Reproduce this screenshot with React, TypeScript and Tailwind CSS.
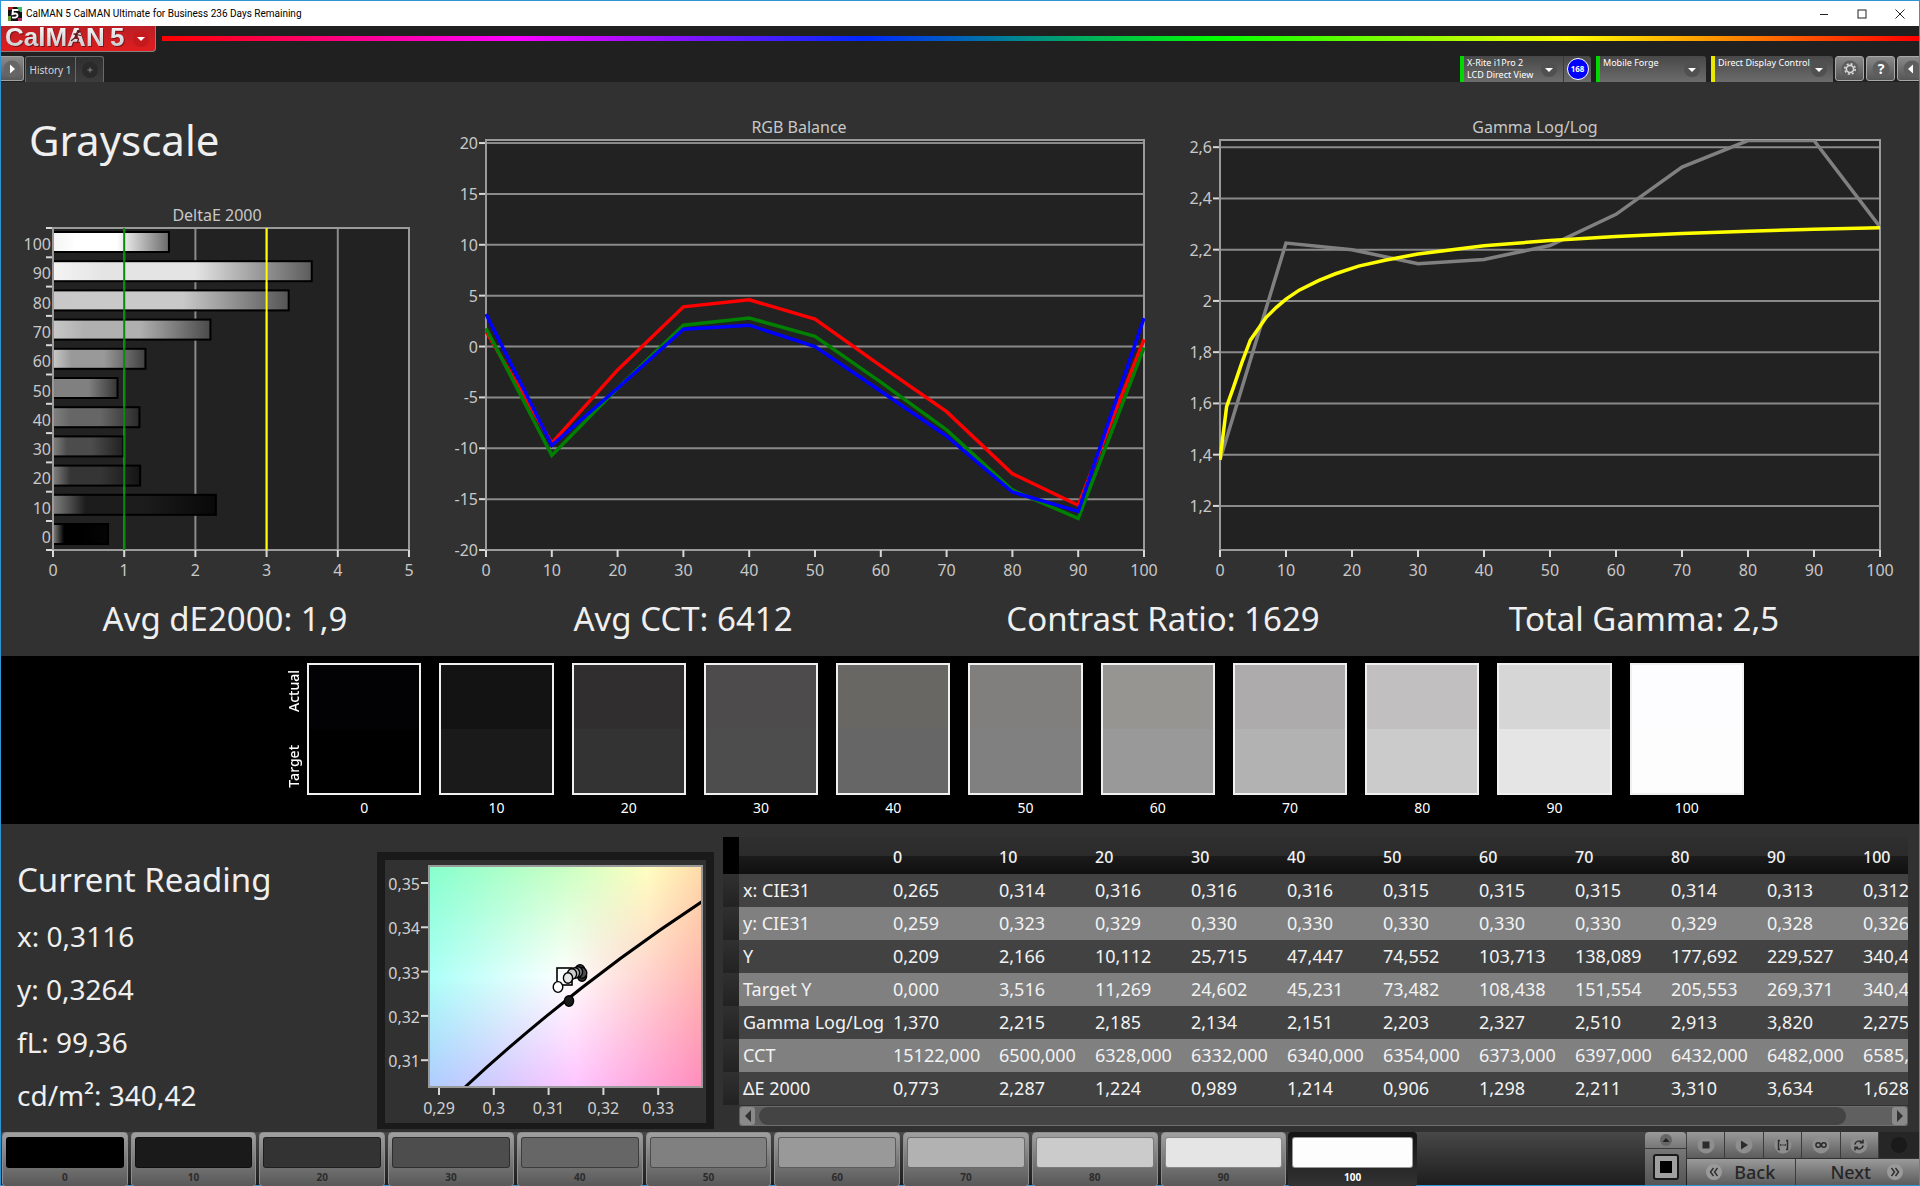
import type { ReactNode } from "react"

type Point = [number, number]
type Series = { color: string; points: Point[] }

const LEVELS = [
  { level: 0, target: "#000000", actual: "#020204", dE: 0.773, mid: "#000000", end: "#050505" },
  { level: 10, target: "#1a1a1a", actual: "#131313", dE: 2.287, mid: "#1c1c1c", end: "#080808" },
  { level: 20, target: "#333333", actual: "#312e2f", dE: 1.224, mid: "#353535", end: "#141414" },
  { level: 30, target: "#4d4d4d", actual: "#4e4b4c", dE: 0.989, mid: "#4c4c4c", end: "#202020" },
  { level: 40, target: "#666666", actual: "#696764", dE: 1.214, mid: "#666666", end: "#2a2a2a" },
  { level: 50, target: "#808080", actual: "#817f7e", dE: 0.906, mid: "#808080", end: "#353535" },
  { level: 60, target: "#999999", actual: "#979592", dE: 1.298, mid: "#999999", end: "#404040" },
  { level: 70, target: "#b2b2b2", actual: "#adabab", dE: 2.211, mid: "#b0b0b0", end: "#4a4a4a" },
  { level: 80, target: "#cbcbcb", actual: "#c1bfc0", dE: 3.31, mid: "#c9c9c9", end: "#555555" },
  { level: 90, target: "#e5e5e5", actual: "#d6d6d6", dE: 3.634, mid: "#e4e4e4", end: "#5c5c5c" },
  { level: 100, target: "#fdfdfd", actual: "#fdfdff", dE: 1.628, mid: "#ffffff", end: "#6a6a6a" },
]

const READINGS = ["x: 0,3116", "y: 0,3264", "fL: 99,36", "cd/m²: 340,42"]
const STATS = ["Avg dE2000: 1,9", "Avg CCT: 6412", "Contrast Ratio: 1629", "Total Gamma: 2,5"]

const TABLE = [
  { label: "x: CIE31", values: ["0,265", "0,314", "0,316", "0,316", "0,316", "0,315", "0,315", "0,315", "0,314", "0,313", "0,312"] },
  { label: "y: CIE31", values: ["0,259", "0,323", "0,329", "0,330", "0,330", "0,330", "0,330", "0,330", "0,329", "0,328", "0,326"] },
  { label: "Y", values: ["0,209", "2,166", "10,112", "25,715", "47,447", "74,552", "103,713", "138,089", "177,692", "229,527", "340,420"] },
  { label: "Target Y", values: ["0,000", "3,516", "11,269", "24,602", "45,231", "73,482", "108,438", "151,554", "205,553", "269,371", "340,420"] },
  { label: "Gamma Log/Log", values: ["1,370", "2,215", "2,185", "2,134", "2,151", "2,203", "2,327", "2,510", "2,913", "3,820", "2,275"] },
  { label: "CCT", values: ["15122,000", "6500,000", "6328,000", "6332,000", "6340,000", "6354,000", "6373,000", "6397,000", "6432,000", "6482,000", "6585,000"] },
  { label: "ΔE 2000", values: ["0,773", "2,287", "1,224", "0,989", "1,214", "0,906", "1,298", "2,211", "3,310", "3,634", "1,628"] },
]

const RGB_SERIES: Series[] = [
  { color: "#ff0000", points: [[0, 1.5], [10, -9.5], [20, -2.3], [30, 3.9], [40, 4.6], [50, 2.7], [60, -1.9], [70, -6.4], [80, -12.5], [90, -15.6], [100, 0.7]] },
  { color: "#008000", points: [[0, 1.8], [10, -10.7], [20, -4.1], [30, 2.1], [40, 2.8], [50, 1], [60, -3.5], [70, -8.2], [80, -14.1], [90, -16.9], [100, -0.1]] },
  { color: "#0000ff", points: [[0, 3.2], [10, -9.7], [20, -4.1], [30, 1.7], [40, 2.1], [50, 0], [60, -4.4], [70, -8.8], [80, -14.3], [90, -16.2], [100, 2.8]] },
]

const GAMMA_SERIES: Series[] = [
  { color: "#808080", points: [[0, 1.38], [10, 2.226], [20, 2.2], [30, 2.145], [40, 2.162], [50, 2.216], [60, 2.338], [70, 2.522], [80, 2.626], [90, 2.626], [100, 2.289]] },
  {
    color: "#ffff00",
    points: [
      [0, 1.38], [1, 1.587], [2, 1.66], [3.3, 1.758], [4.6, 1.847], [7, 1.936], [8.5, 1.974], [10, 2.007], [12, 2.042], [15, 2.08], [17.5, 2.106],
      [21, 2.136], [25, 2.159], [30, 2.183], [40, 2.215], [50, 2.236], [60, 2.251], [70, 2.263], [80, 2.272], [90, 2.28], [100, 2.286],
    ],
  },
]

/** Line chart with horizontal grid lines and a 0-100 stimulus axis. */
const LineChart = ({
  title,
  min,
  max,
  left = 56,
  ticks,
  series,
}: {
  title: string
  min: number
  max: number
  left?: number
  ticks: number[]
  series: Series[]
}) => {
  const right = 714
  const top = 30
  const bottom = 440
  const x = (v: number) => left + ((right - left) * v) / 100
  const y = (v: number) => bottom - ((bottom - top) * (v - min)) / (max - min)
  const clipId = title.replace(/\W/g, "")

  return (
    <svg viewBox="0 0 736 480" role="img" aria-label={title} className="block h-auto w-full" fontSize="16" fill="#c8c8c8">
      <clipPath id={clipId}>
        <rect x={left - 1} y={top} width={right - left + 2} height={bottom - top} />
      </clipPath>
      <text x="369" y="23" textAnchor="middle">{title}</text>
      <rect x={left} y={top} width={right - left} height={bottom - top} fill="#222222" />
      {ticks.map((t) => (
        <g key={t}>
          <line x1={left} x2={right} y1={y(t)} y2={y(t)} stroke="#8a8a8a" strokeWidth="2" />
          <line x1={left - 7} x2={left} y1={y(t)} y2={y(t)} stroke="#d8d8d8" strokeWidth="2" />
          <text x={left - 8} y={y(t) + 6} textAnchor="end">{String(t).replace(".", ",")}</text>
        </g>
      ))}
      <rect x={left} y={top} width={right - left} height={bottom - top} fill="none" stroke="#9a9a9a" strokeWidth="2" />
      {LEVELS.map(({ level }) => (
        <g key={level}>
          <line x1={x(level)} x2={x(level)} y1={bottom} y2={bottom + 7} stroke="#d8d8d8" strokeWidth="2" />
          <text x={x(level)} y="466" textAnchor="middle">{level}</text>
        </g>
      ))}
      <g clipPath={`url(#${clipId})`}>
        {series.map((s) => (
          <polyline
            key={s.color}
            points={s.points.map(([px, py]) => `${x(px)},${y(py)}`).join(" ")}
            fill="none"
            stroke={s.color}
            strokeWidth="3.5"
          />
        ))}
      </g>
    </svg>
  )
}

const DeltaEChart = () => {
  const x = (v: number) => 52 + v * 71.2
  const rows = [...LEVELS].reverse()

  return (
    <svg viewBox="0 0 429 400" role="img" aria-label="DeltaE 2000" className="block h-auto w-full" fontSize="16" fill="#c8c8c8">
      <defs>
        {rows.map((r) => (
          <linearGradient key={r.level} id={`bar${r.level}`}>
            <stop offset="0" stopColor={r.level > 80 ? "#f4f4f4" : r.level > 50 ? "#c8c8c8" : "#808080"} />
            <stop offset="0.2" stopColor={r.mid} />
            <stop offset="0.55" stopColor={r.mid} />
            <stop offset="1" stopColor={r.end} />
          </linearGradient>
        ))}
      </defs>
      <text x="216" y="31" textAnchor="middle">DeltaE 2000</text>
      <rect x="52" y="38" width="356" height="322" fill="#222222" />
      {[1, 2, 3, 4].map((v) => (
        <line key={v} x1={x(v)} x2={x(v)} y1="38" y2="360" stroke="#8a8a8a" strokeWidth="2" />
      ))}
      {rows.map((r, i) => (
        <g key={r.level}>
          <line x1="45" x2="52" y1={38 + i * 29.3} y2={38 + i * 29.3} stroke="#d8d8d8" strokeWidth="2" />
          <text x="50" y={60 + i * 29.3} textAnchor="end">{r.level}</text>
          <rect
            x="52"
            y={42 + i * 29.2}
            width={r.dE * 71.2}
            height="20"
            fill={`url(#bar${r.level})`}
            stroke="#000000"
            strokeWidth="2"
          />
        </g>
      ))}
      <line x1="45" x2="52" y1="360" y2="360" stroke="#d8d8d8" strokeWidth="2" />
      <rect x="52" y="38" width="356" height="322" fill="none" stroke="#9a9a9a" strokeWidth="2" />
      {[0, 1, 2, 3, 4, 5].map((v) => (
        <g key={v}>
          <line x1={x(v)} x2={x(v)} y1="360" y2="367" stroke="#d8d8d8" strokeWidth="2" />
          <text x={x(v)} y="386" textAnchor="middle">{v}</text>
        </g>
      ))}
      <line x1={x(1)} x2={x(1)} y1="38" y2="360" stroke="#0a8a0a" strokeWidth="2" />
      <line x1={x(3)} x2={x(3)} y1="38" y2="360" stroke="#ffff00" strokeWidth="2" />
    </svg>
  )
}

/** Zoomed CIE 1931 view around D65, with the daylight locus and measured points. */
const CieChart = () => (
  <svg viewBox="0 0 321 263" role="img" aria-label="CIE 1931 xy" className="block h-auto w-full" fontSize="16" fill="#d0d0d0">
    <defs>
      <linearGradient id="cieTop">
        <stop offset="0" stopColor="#86ffcc" />
        <stop offset="0.5" stopColor="#c8ffc2" />
        <stop offset="0.8" stopColor="#ffffc0" />
        <stop offset="1" stopColor="#ffdaa8" />
      </linearGradient>
      <linearGradient id="cieMid">
        <stop offset="0" stopColor="#acfff8" />
        <stop offset="0.5" stopColor="#ffffff" />
        <stop offset="1" stopColor="#ffb6ae" />
      </linearGradient>
      <linearGradient id="cieLow">
        <stop offset="0" stopColor="#aeccff" />
        <stop offset="0.54" stopColor="#ffc4ff" />
        <stop offset="1" stopColor="#ff8cbc" />
      </linearGradient>
      <linearGradient id="fadeDown" x2="0" y2="1">
        <stop offset="0" stopColor="#fff" />
        <stop offset="0.5" stopColor="#000" />
      </linearGradient>
      <linearGradient id="fadeUp" x2="0" y2="1">
        <stop offset="0.5" stopColor="#000" />
        <stop offset="1" stopColor="#fff" />
      </linearGradient>
      <mask id="topMask">
        <rect x="44" y="5" width="273" height="221" fill="url(#fadeDown)" />
      </mask>
      <mask id="lowMask">
        <rect x="44" y="5" width="273" height="221" fill="url(#fadeUp)" />
      </mask>
      <clipPath id="cieClip">
        <rect x="44" y="5" width="273" height="221" />
      </clipPath>
    </defs>
    <rect x="44" y="5" width="273" height="221" fill="url(#cieMid)" />
    <rect x="44" y="5" width="273" height="221" fill="url(#cieTop)" mask="url(#topMask)" />
    <rect x="44" y="5" width="273" height="221" fill="url(#cieLow)" mask="url(#lowMask)" />
    <path d="M78 228 Q190 124 318 40" fill="none" stroke="#000" strokeWidth="3" clipPath="url(#cieClip)" />
    <rect x="44" y="5" width="273" height="221" fill="none" stroke="#9a9a9a" strokeWidth="2" />
    <rect x="172" y="107" width="15" height="17" fill="none" stroke="#000" strokeWidth="1.6" />
    <g stroke="#000" strokeWidth="1.4">
      <ellipse cx="184" cy="140" rx="4.6" ry="5.2" fill="#1a1a1a" />
      <ellipse cx="197" cy="115" rx="4.6" ry="5.2" fill="#333" />
      <ellipse cx="195" cy="109" rx="4.8" ry="5.4" fill="#333" />
      <ellipse cx="197" cy="112" rx="4.8" ry="5.4" fill="#4d4d4d" />
      <ellipse cx="193" cy="111" rx="4.6" ry="5.2" fill="#808080" />
      <ellipse cx="190" cy="112" rx="4.6" ry="5.2" fill="#b2b2b2" />
      <ellipse cx="187" cy="113" rx="4.6" ry="5.2" fill="#ccc" />
      <ellipse cx="183" cy="117" rx="4.6" ry="5.2" fill="#e6e6e6" />
      <ellipse cx="173" cy="126" rx="4.8" ry="5.4" fill="#fff" />
    </g>
    {["0,35", "0,34", "0,33", "0,32", "0,31"].map((label, i) => (
      <g key={label}>
        <line x1="36" x2="43" y1={22 + i * 44.3} y2={22 + i * 44.3} stroke="#d8d8d8" strokeWidth="2" />
        <text x="35" y={29 + i * 44.3} textAnchor="end">{label}</text>
      </g>
    ))}
    {["0,29", "0,3", "0,31", "0,32", "0,33"].map((label, i) => (
      <g key={label}>
        <line x1={54 + i * 54.8} x2={54 + i * 54.8} y1="227" y2="234" stroke="#d8d8d8" strokeWidth="2" />
        <text x={54 + i * 54.8} y="253" textAnchor="middle">{label}</text>
      </g>
    ))}
  </svg>
)

const TitleBar = () => (
  <div className="flex h-[25px] items-center bg-white text-black">
    <svg viewBox="0 0 14 14" className="ml-[7px] size-[14px]" aria-hidden="true">
      <rect width="14" height="14" fill="#111" />
      <path d="M0 0h5v3H0z" fill="#a22" />
      <path d="M9 0h5v5h-2z" fill="#3b6" />
      <path d="M0 9h3v5H0z" fill="#693" />
      <path d="M10 11h4v3h-4z" fill="#b36" />
      <path d="M10.5 3H5l-.5 4c3-1 5-.5 5 1.4C9.500 10.500 7 11 4 10.400" fill="none" stroke="#fff" strokeWidth="1.9" />
    </svg>
    <span className="ml-1 flex-1 font-[Roboto,sans-serif] text-[10px]">CalMAN 5 CalMAN Ultimate for Business 236 Days Remaining</span>
    <button aria-label="Minimize" className="grid h-full w-[38px] place-items-center">
      <svg viewBox="0 0 10 10" className="size-[10px]" stroke="#222" fill="none"><path d="M1 5.5h8" /></svg>
    </button>
    <button aria-label="Maximize" className="grid h-full w-[38px] place-items-center">
      <svg viewBox="0 0 10 10" className="size-[10px]" stroke="#222" fill="none"><rect x="1" y="1" width="8" height="8" /></svg>
    </button>
    <button aria-label="Close" className="grid h-full w-[38px] place-items-center">
      <svg viewBox="0 0 10 10" className="size-[10px]" stroke="#222" fill="none"><path d="M.5.5l9 9M9.5.5l-9 9" /></svg>
    </button>
  </div>
)

const Logo = () => (
  <button aria-label="CalMAN 5 menu" className="h-[26px] w-[155px] rounded-br-sm border-r border-b border-[#8d8080] bg-linear-to-b from-[#b91f24] to-[#e11c1f]">
    <svg viewBox="0 0 154 25" className="block h-[25px] w-[154px] overflow-visible">
      <defs>
        <linearGradient id="silver" x2="0" y2="1">
          <stop offset="0" stopColor="#ffffff" />
          <stop offset="1" stopColor="#bfc3c6" />
        </linearGradient>
      </defs>
      <g
        className="drop-shadow-[1px_1px_0_#7d1114]"
        fontFamily="'Liberation Sans', Arial, sans-serif"
        fontWeight="700"
        fontSize="26"
        fill="url(#silver)"
      >
        <text x="4" y="20">CalMAN</text>
        <text x="109" y="20">5</text>
      </g>
      <g stroke="#5a1a1c" strokeWidth="1.3" fill="none" strokeLinecap="round">
        <circle cx="77.5" cy="5.5" r="1" fill="#5a1a1c" />
        <path d="M76.5 7.5l-2 4 3 1.5-1 3.5M74.5 11.5l-4 3M73 8l3 .5 3.5 1" />
      </g>
      <circle cx="140" cy="13" r="8" fill="#c41a1e" />
      <path d="M136 11h8l-4 4z" fill="#fff" />
    </svg>
  </button>
)

const DropArrow = () => (
  <svg viewBox="0 0 16 16" className="size-4 shrink-0" aria-hidden="true">
    <circle cx="8" cy="8" r="8" fill="#505050" />
    <path d="M4 7h8l-4 4z" fill="#fff" />
  </svg>
)

const DeviceMenu = ({ lines, stripe, className, children }: { lines: string[]; stripe: string; className: string; children?: ReactNode }) => (
  <div className={`flex h-full rounded-t-[3px] bg-linear-to-b from-[#484848] to-[#6c6c6c] ${className}`}>
    <span className={`w-1 shrink-0 ${stripe}`} />
    <button aria-haspopup="menu" className="flex min-w-0 flex-1 items-start pr-[6px] pl-[3px] text-left text-[9px] leading-3 text-white">
      <span className="flex-1 pt-px whitespace-nowrap">
        {lines.map((l) => (
          <span key={l} className="block">{l}</span>
        ))}
      </span>
      <span className="mt-[5px]"><DropArrow /></span>
    </button>
    {children}
  </div>
)

const SquareButton = ({ label, children }: { label: string; children: ReactNode }) => (
  <button
    aria-label={label}
    className="grid h-[25px] w-[29px] shrink-0 place-items-center rounded-[3px] border border-[#a8a8a8] bg-linear-to-b from-[#8a8a8a] to-[#555555]"
  >
    <svg viewBox="0 0 18 18" className="size-[18px]">
      <circle cx="9" cy="9" r="8.5" fill="#5e5e5e" />
      {children}
    </svg>
  </button>
)

const Header = () => (
  <header className="h-14 bg-[#202020]">
    <div className="flex h-[30px] items-start">
      <Logo />
      <div className="mt-[10px] ml-[6px] h-[5px] flex-1 bg-[linear-gradient(to_right,#f00,#f0f,#0028ff,#0f0,#ff0,#f00)]" />
    </div>
    <div className="flex h-[26px]">
      <button aria-label="Show workflow" className="grid h-[25px] w-[23px] place-items-center rounded-r-[3px] border border-l-0 border-[#a0a0a0] bg-linear-to-b from-[#8a8a8a] to-[#5a5a5a]">
        <svg viewBox="0 0 18 18" className="size-[18px]">
          <circle cx="9" cy="9" r="8.5" fill="#666" />
          <path d="M7 4.5v9l5-4.5z" fill="#fff" />
        </svg>
      </button>
      <nav className="ml-px flex rounded-t-[3px] border border-b-0 border-[#6a6a6a] bg-linear-to-b from-[#2f2f2f] to-[#3c3c3c]">
        <a href="#history-1" className="w-[50px] border-r border-[#6a6a6a] text-center text-[10px] leading-[26px] text-[#d6d6d6]">History 1</a>
        <button aria-label="Add history" className="grid w-[27px] place-items-center">
          <svg viewBox="0 0 18 18" className="size-[18px]">
            <circle cx="9" cy="9" r="8" fill="#2a2a2a" />
            <path d="M9 6.5v5M6.5 9h5" stroke="#888" />
          </svg>
        </button>
      </nav>
      <div className="ml-auto flex items-start">
        <DeviceMenu lines={["X-Rite i1Pro 2", "LCD Direct View"]} stripe="bg-[#00d800]" className="w-[131px]">
          <span className="grid w-7 shrink-0 place-items-center border-l border-[#3a3a3a]">
            <span className="grid size-[22px] place-items-center rounded-full border border-white bg-[#0000ff] text-[8px] font-bold text-white">168</span>
          </span>
        </DeviceMenu>
        <DeviceMenu lines={["Mobile Forge"]} stripe="bg-[#00d800]" className="ml-[5px] w-[110px]" />
        <DeviceMenu lines={["Direct Display Control"]} stripe="bg-[#e8e800]" className="ml-[5px] w-[122px]" />
        <div className="ml-[2px] flex w-[84px] gap-[2px] overflow-hidden">
          <SquareButton label="Settings">
            <circle cx="9" cy="9" r="3.6" fill="none" stroke="#d8d8d8" strokeWidth="1.6" />
            <circle cx="9" cy="9" r="5.2" fill="none" stroke="#d8d8d8" strokeWidth="1.6" strokeDasharray="2 2.08" />
          </SquareButton>
          <SquareButton label="Help">
            <text x="9" y="14" textAnchor="middle" fontSize="14" fontWeight="700" fill="#fff">?</text>
          </SquareButton>
          <SquareButton label="Collapse">
            <path d="M10 4.5v9L5 9z" fill="#fff" />
          </SquareButton>
        </div>
      </div>
    </div>
  </header>
)

const SwatchBand = () => (
  <section className="flex h-[168px] bg-black pt-[7px] pr-[175px] pl-[283px] text-white">
    <div className="flex h-[132px] w-[23px] flex-col justify-between py-[7px] text-sm leading-5 font-medium">
      <span className="rotate-180 [writing-mode:vertical-rl]">Actual</span>
      <span className="rotate-180 text-right [writing-mode:vertical-rl]">Target</span>
    </div>
    <div className="grid flex-1 grid-cols-11 gap-x-[18px]">
      {LEVELS.map((l) => (
        <figure key={l.level} className="text-center">
          <div className="flex h-[132px] flex-col border-2 border-[#f0f0f0]">
            <div className="flex-1" style={{ backgroundColor: l.actual }} />
            <div className="flex-1" style={{ backgroundColor: l.target }} />
          </div>
          <figcaption className="text-sm leading-[26px]">{l.level}</figcaption>
        </figure>
      ))}
    </div>
  </section>
)

const ReadingsTable = () => (
  <div className="min-w-0 flex-1 text-lg leading-[33px] text-[#f2f2f2]">
    <div className="overflow-hidden">
      <table className="w-[1232px] table-fixed border-collapse whitespace-nowrap">
        <colgroup>
          <col className="w-4" />
          <col className="w-[150px]" />
          <col className="w-[106px]" />
          {LEVELS.slice(1).map((l) => (
            <col key={l.level} className="w-24" />
          ))}
        </colgroup>
        <thead>
          <tr className="h-[37px] bg-[linear-gradient(#2f2f2f,#2b2b2b_50%,#1b1b1b_50%,#101010)]">
            <td className="bg-black" />
            <td />
            {LEVELS.map((l) => (
              <th key={l.level} scope="col" className="pt-[2px] pl-1 text-left text-base font-medium">{l.level}</th>
            ))}
          </tr>
        </thead>
        <tbody>
          {TABLE.map((row) => (
            <tr key={row.label} className="h-[33px] bg-[#424242] even:bg-[#808080]">
              <td className="bg-linear-to-b from-[#303030] to-[#222222]" />
              <th scope="row" className="pl-1 text-left font-normal">{row.label}</th>
              {row.values.map((v, i) => (
                <td key={i} className="pl-1">{v}</td>
              ))}
            </tr>
          ))}
        </tbody>
      </table>
    </div>
    <div className="mt-px ml-4 flex h-5 items-center rounded-[3px] border-y border-[#6e6e6e] bg-[#606060]">
      <button aria-label="Scroll left" className="ml-px grid h-[18px] w-[15px] place-items-center rounded-[3px] bg-[#8a8a8a]">
        <svg viewBox="0 0 8 12" className="h-3 w-2"><path d="M7 0v12L1 6z" fill="#333" /></svg>
      </button>
      <div className="ml-1 h-[18px] w-[93%] rounded-full bg-[#444444]" />
      <button aria-label="Scroll right" className="mr-px ml-auto grid h-[18px] w-[15px] place-items-center rounded-[3px] bg-[#8a8a8a]">
        <svg viewBox="0 0 8 12" className="h-3 w-2"><path d="M1 0v12l6-6z" fill="#333" /></svg>
      </button>
    </div>
  </div>
)

const TransportButton = ({ label, children }: { label: string; children: ReactNode }) => (
  <button aria-label={label} className="grid flex-1 place-items-center border-r border-[#3c3c3c] bg-linear-to-b from-[#9a9a9a] to-[#5c5c5c]">
    <svg viewBox="0 0 18 18" className="size-[18px]" fill="none" stroke="#2c2c2c" strokeWidth="1.5">
      <circle cx="9" cy="9" r="8.5" fill="#8e8e8e" stroke="none" />
      {children}
    </svg>
  </button>
)

const LevelBar = () => (
  <footer className="flex h-[53px] bg-linear-to-b from-[#484848] to-[#1e1e1e]">
    <div className="grid w-[1416px] grid-cols-11">
      {LEVELS.map((l) => {
        const selected = l.level === 100
        return (
          <button
            key={l.level}
            aria-pressed={selected}
            className={
              selected
                ? "flex flex-col rounded-sm bg-linear-to-b from-[#141414] to-[#333333] px-1 pt-[5px] text-[10px] font-bold text-white"
                : "mr-[2px] ml-px flex flex-col rounded-sm border border-[#8e8e8e] bg-linear-to-b from-[#a0a0a0] to-[#585858] px-[3px] pt-1 text-[10px] font-bold text-[#2c2c2c]"
            }
          >
            <span className="h-[31px] w-full rounded-[3px] border border-black/40" style={{ backgroundColor: l.target }} />
            <span className="w-full text-center leading-[18px]">{l.level}</span>
          </button>
        )
      })}
    </div>
    <div className="ml-auto flex w-[274px] gap-px">
      <div className="flex w-[41px] flex-col gap-px">
        <button aria-label="Expand" className="grid h-4 place-items-center rounded-t-sm bg-linear-to-b from-[#9a9a9a] to-[#777777]">
          <svg viewBox="0 0 12 12" className="size-3"><circle cx="6" cy="6" r="6" fill="#666" /><path d="M2.5 8h7L6 4z" fill="#222" /></svg>
        </button>
        <button aria-label="Stop pattern" className="grid flex-1 place-items-center bg-linear-to-b from-[#777777] to-[#555555]">
          <span className="grid size-[26px] place-items-center rounded-[3px] border-2 border-[#1a1a1a] bg-[#a0a0a0]">
            <span className="size-3 bg-black" />
          </span>
        </button>
      </div>
      <div className="flex flex-1 flex-col gap-px">
        <div className="flex h-[26px]">
          <TransportButton label="Stop"><rect x="5.5" y="5.5" width="7" height="7" fill="#2c2c2c" stroke="none" /></TransportButton>
          <TransportButton label="Play"><path d="M6 4.500v9l7-4.500z" fill="#2c2c2c" stroke="none" /></TransportButton>
          <TransportButton label="Read series"><path d="M6 4.500H4.500v9H6M12 4.500h1.500v9H12M6 9h1.500M8.500 9h1M10.500 9H12" /></TransportButton>
          <TransportButton label="Read continuously">
            <circle cx="6.2" cy="9" r="2.3" />
            <circle cx="11.8" cy="9" r="2.3" />
          </TransportButton>
          <TransportButton label="Refresh"><path d="M4.800 8.500a4.300 4.300 0 0 1 7.500-2M13 3.500v3.300H9.800M13.200 9.500a4.300 4.300 0 0 1-7.500 2M5 14.500v-3.300h3.200" /></TransportButton>
          <span className="grid w-10 place-items-center bg-[#262626]">
            <span className="size-4 rounded-full bg-[#1a1a1a]" />
          </span>
        </div>
        <div className="flex flex-1 text-lg leading-6 font-medium text-[#262626]">
          <button className="flex flex-1 items-center justify-center gap-3 border-r border-[#3c3c3c] bg-linear-to-b from-[#9a9a9a] to-[#5c5c5c]">
            <svg viewBox="0 0 16 16" className="size-4" fill="none" stroke="#2c2c2c" strokeWidth="1.4">
              <circle cx="8" cy="8" r="8" fill="#9a9a9a" stroke="none" />
              <path d="M7.500 4l-3 4 3 4M11.500 4l-3 4 3 4" />
            </svg>
            Back
          </button>
          <button className="flex flex-1 items-center justify-end gap-4 bg-linear-to-b from-[#9a9a9a] to-[#5c5c5c] pr-4">
            Next
            <svg viewBox="0 0 16 16" className="size-4" fill="none" stroke="#2c2c2c" strokeWidth="1.4">
              <circle cx="8" cy="8" r="8" fill="#9a9a9a" stroke="none" />
              <path d="M4.500 4l3 4-3 4M8.500 4l3 4-3 4" />
            </svg>
          </button>
        </div>
      </div>
    </div>
  </footer>
)

const App = () => (
  <div className="flex min-h-screen flex-col border border-[#2f94d6] bg-[#313131] font-['Noto_Sans','Open_Sans',sans-serif] text-[#efefef]">
    <TitleBar />
    <Header />
    <main className="flex-1">
      <section className="grid grid-cols-[429fr_736fr_736fr_17fr] pt-7">
        <div>
          <h1 className="h-20 pl-7 text-[42px] leading-[60px]">Grayscale</h1>
          <DeltaEChart />
        </div>
        <LineChart title="RGB Balance" min={-20} max={20.3} ticks={[20, 15, 10, 5, 0, -5, -10, -15, -20]} series={RGB_SERIES} />
        <LineChart title="Gamma Log/Log" min={1.028} max={2.628} left={54} ticks={[2.6, 2.4, 2.2, 2, 1.8, 1.6, 1.4, 1.2]} series={GAMMA_SERIES} />
      </section>
      <section className="grid h-[66px] grid-cols-[448fr_468fr_492fr_470fr_40fr] text-center text-[33px] leading-[58px] whitespace-nowrap">
        {STATS.map((s) => (
          <p key={s}>{s}</p>
        ))}
      </section>
      <SwatchBand />
      <section className="flex h-[308px] pt-[13px] pr-[11px]">
        <div className="w-[376px] shrink-0 pt-4 pl-4 text-[28px] leading-[53px]">
          <h2 className="mb-1 text-[33px]">Current Reading</h2>
          {READINGS.map((r) => (
            <p key={r}>{r}</p>
          ))}
        </div>
        <div className="mt-[15px] mr-[9px] h-[277px] w-[337px] shrink-0 border-8 border-b-[6px] border-[#1a1a1a] pt-px">
          <CieChart />
        </div>
        <ReadingsTable />
      </section>
    </main>
    <LevelBar />
  </div>
)

export default App
